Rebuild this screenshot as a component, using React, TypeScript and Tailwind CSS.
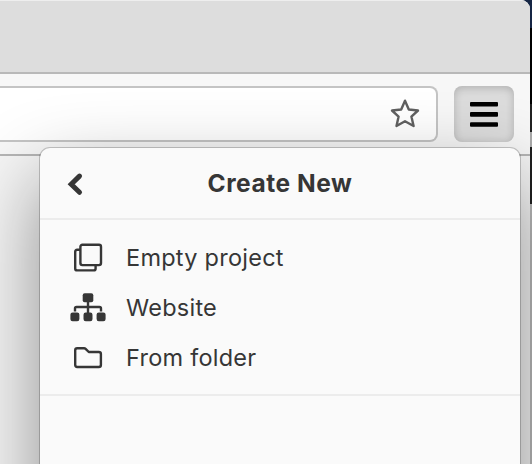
import React from "react";

function Star() {
  return (
    <svg className="h-[30px] w-[30px]" viewBox="0 0 30 30" fill="none" stroke="#606060" strokeWidth="2.4" strokeLinejoin="round">
      <path d="M15 1.7 L18.8 10.5 L28 11.5 L21.4 17.6 L23.6 27 L15 22.3 L6.5 27 L8.6 17.6 L2 11.5 L11.2 10.5 Z" />
    </svg>
  );
}

function MenuBars() {
  return (
    <svg className="h-[25px] w-7" viewBox="0 0 28 25" fill="#000">
      <rect x="0" y="0" width="28" height="4.6" rx="1" />
      <rect x="0" y="10.1" width="28" height="4.6" rx="1" />
      <rect x="0" y="20.2" width="28" height="4.6" rx="1" />
    </svg>
  );
}

function EmptyIcon() {
  return (
    <svg className="h-9 w-9" viewBox="0 0 36 36" fill="none" stroke="#363636" strokeWidth="2.4" strokeLinejoin="round">
      <rect x="10.4" y="4.7" width="20.6" height="20.4" rx="2" />
      <path d="M10 9.8 H7.2 Q5.2 9.8 5.2 11.8 V28.4 Q5.2 30.4 7.2 30.4 H23.6 Q25.6 30.4 25.6 28.4 V25.3" />
    </svg>
  );
}

function SiteIcon() {
  return (
    <svg className="h-9 w-9 overflow-visible" viewBox="0 0 36 36" fill="#363636">
      <rect x="12.7" y="3.3" width="10.6" height="9" rx="2" />
      <path d="M18 11 V24 M5 21.5 V18.5 Q5 17 6.5 17 H29.5 Q31 17 31 18.5 V21.5" fill="none" stroke="#363636" strokeWidth="2.4" />
      <rect x="0.4" y="22.6" width="9" height="8.7" rx="2.2" />
      <rect x="13.5" y="22.6" width="9" height="8.7" rx="2.2" />
      <rect x="26.6" y="22.6" width="9" height="8.7" rx="2.2" />
    </svg>
  );
}

function FolderIcon() {
  return (
    <svg className="h-9 w-9" viewBox="0 0 36 36" fill="none" stroke="#363636" strokeWidth="2.4" strokeLinejoin="round">
      <path d="M5.2 10.3 Q5.2 8.2 7.2 8.2 H14 Q15 8.2 15.6 8.8 L18.8 12 H28.8 Q30.9 12 30.9 14 V25 Q30.9 27 28.8 27 H7.2 Q5.2 27 5.2 25 Z" />
    </svg>
  );
}

const items = [
  { label: "Empty project", icon: <EmptyIcon /> },
  { label: "Website", icon: <SiteIcon /> },
  { label: "From folder", icon: <FolderIcon /> },
];

export default function App() {
  return (
    <div className="relative flex h-[464px] w-[532px] overflow-hidden bg-[linear-gradient(to_bottom,#152544_0_28px,#000_28px_104px,#222_104px_132px,#aaa_132px_147px,#202020_147px_204px,#bababa_204px)] font-['Inter',sans-serif] text-[#363636]">
      <div className="flex w-[530px] flex-col overflow-hidden rounded-tr-[9px] bg-[#f6f6f6]">
        <div className="h-[74px] shrink-0 border-t border-b-2 border-t-[#eeeeee] border-b-[#b8b8b8] bg-[#dddddd]" />
        <div className="flex h-[82px] shrink-0 gap-4 border-b-2 border-[#b5b5b5] bg-[#f7f7f7] pt-3 pr-4">
          <div className="flex h-14 flex-1 items-center justify-end rounded-r-lg border-2 border-l-0 border-[#c4c4c4] bg-white pr-4">
            <Star />
          </div>
          <div className="flex h-14 w-[60px] items-center justify-center rounded-lg bg-[#dcdcdc] shadow-[inset_0_2px_8px_rgba(0,0,0,0.2)]">
            <MenuBars />
          </div>
        </div>
        <div className="flex-1 bg-[#f5f5f5]" />
      </div>
      <div className="absolute top-[148px] left-10 h-[460px] w-[480px] rounded-[10px] bg-[#fafafa] shadow-[0_0_0_1px_rgba(0,0,0,0.2),0_32px_80px_rgba(0,0,0,0.43)]">
        <div className="relative flex h-[72px] items-center justify-center border-b-2 border-[#ececec]">
          <svg className="absolute top-[24px] left-[26px] h-6 w-6" viewBox="0 0 24 24" fill="none" stroke="#363636" strokeWidth="5" strokeLinecap="round" strokeLinejoin="miter">
            <path d="M13.5 4.1 L5.2 12.2 L13.5 20.3" />
          </svg>
          <h1 className="text-[24.5px] font-bold tracking-[0.55px]">Create New</h1>
        </div>
        <div className="flex h-[176px] flex-col border-b-2 border-[#ececec] pt-[13px] pl-[30px]">
          {items.map((item) => (
            <div key={item.label} className="flex h-[50px] items-center gap-5">
              {item.icon}
              <span className="text-[23.5px] tracking-[0.25px]">{item.label}</span>
            </div>
          ))}
        </div>
      </div>
    </div>
  );
}
